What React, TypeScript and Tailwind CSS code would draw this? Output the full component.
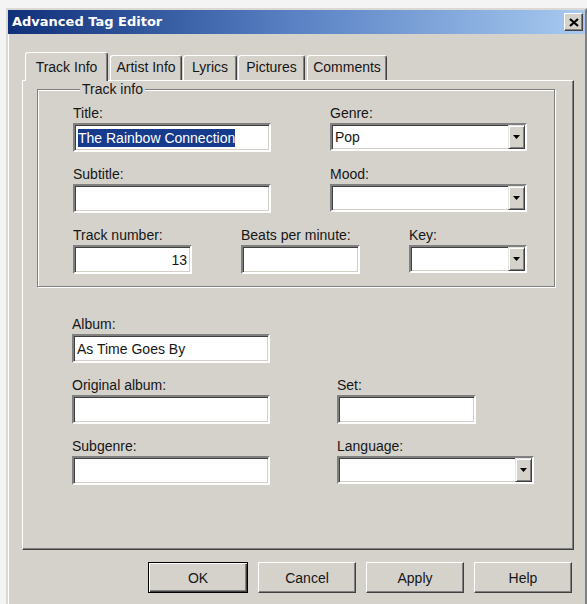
import React from "react";

const sunken =
  "bg-white border-2 border-t-[#808080] border-l-[#808080] border-b-white border-r-white shadow-[inset_1px_1px_0_#404040,inset_-1px_-1px_0_#d4d0c8]";

function Label({ text }: { text: string }) {
  return <div className="h-[18px] leading-[18px] text-[14px] whitespace-nowrap text-[#161616]">{text}</div>;
}

function TextBox({ value, right }: { value?: React.ReactNode; right?: boolean }) {
  return (
    <div
      className={
        "mt-[1px] h-[29px] flex items-center px-[3px] text-[14px] leading-[18px] text-[#161616] " +
        sunken +
        (right ? " justify-end" : "")
      }
    >
      {value}
    </div>
  );
}

function Combo({ value }: { value?: string }) {
  return (
    <div className={"mt-[1px] h-[28px] flex items-stretch " + sunken}>
      <div className="flex-1 flex items-center px-[3px] text-[14px] leading-[18px] text-[#161616]">{value}</div>
      <div className="w-[17px] flex items-center justify-center bg-[#d5d2cc] border border-t-[#e6e4e0] border-l-[#e6e4e0] border-b-[#404040] border-r-[#404040] shadow-[inset_1px_1px_0_#fff,inset_-1px_-1px_0_#808080]">
        <svg width="7" height="4" viewBox="0 0 7 4">
          <path d="M0 0H7L3.5 4Z" fill="#000" />
        </svg>
      </div>
    </div>
  );
}

function Tab({ label, cls, selected }: { label: string; cls: string; selected?: boolean }) {
  return (
    <div
      className={
        "rounded-t-[3px] border-t border-l border-white border-r border-r-[#404040] shadow-[inset_-1px_0_0_#808080] bg-[#d5d2cc] text-center text-[14px] leading-[18px] text-[#161616] whitespace-nowrap " +
        cls +
        (selected ? " relative z-10 h-[29px] -mb-[1px] pt-[5px]" : " h-[25px] pt-[2px]")
      }
    >
      {label}
    </div>
  );
}

function Btn({ label, def, cls }: { label: string; def?: boolean; cls: string }) {
  return (
    <button
      className={
        "h-[31px] bg-[#d5d2cc] text-[14px] leading-[18px] text-[#161616] " +
        cls +
        (def
          ? " border border-black shadow-[inset_1px_1px_0_#fff,inset_-1px_-1px_0_#404040,inset_-2px_-2px_0_#808080]"
          : " border border-t-white border-l-white border-b-[#404040] border-r-[#404040] shadow-[inset_-1px_-1px_0_#808080]")
      }
    >
      {label}
    </button>
  );
}

export default function App() {
  return (
    <div className="w-[587px] h-[604px] bg-[#f4f4f4] pt-[8px] pl-[6px] overflow-hidden font-['Liberation_Sans',Arial,sans-serif]">
      <div className="w-[581px] h-[600px] bg-[#d5d2cc] border-2 border-t-[#dcd9d4] border-l-[#dcd9d4] border-r-[#808080] border-b-[#808080] shadow-[inset_1px_1px_0_#fff]">
        {/* Title bar */}
        <div className="h-[24px] flex items-center justify-between pl-[4px] pr-[2px] bg-linear-to-r from-[#10307a] via-[#5a82c4] to-[#a8caf0]">
          <div className="font-['DejaVu_Sans',sans-serif] font-bold text-[13px] leading-[16px] text-white whitespace-nowrap">
            Advanced Tag Editor
          </div>
          <div className="w-[19px] h-[18px] flex items-center justify-center bg-[#d5d2cc] border border-t-white border-l-white border-b-[#404040] border-r-[#404040] shadow-[inset_-1px_-1px_0_#808080]">
            <svg width="10" height="9" viewBox="0 0 10 9">
              <path d="M1 1L9 8M9 1L1 8" stroke="#000" strokeWidth="2.2" />
            </svg>
          </div>
        </div>

        <div className="px-[14px]">
          {/* Tabs */}
          <div className="mt-[18px] h-[28px] flex items-end pl-[3px]">
            <Tab label="Track Info" cls="w-[83px]" selected />
            <Tab label="Artist Info" cls="ml-[2px] w-[72px]" />
            <Tab label="Lyrics" cls="ml-[1px] w-[54px]" />
            <Tab label="Pictures" cls="ml-[1px] w-[67px]" />
            <Tab label="Comments" cls="ml-[2px] w-[80px]" />
          </div>

          {/* Panel */}
          <div className="w-[552px] h-[470px] border border-t-white border-l-white border-r-[#404040] border-b-[#404040] shadow-[inset_-1px_-1px_0_#808080]">
            <fieldset className="ml-[14px] w-[518px] border border-[#808080] shadow-[inset_1px_1px_0_#fff,1px_1px_0_#fff] pl-[35px] pt-[7px] pb-[12px]">
              <legend className="ml-[7px] px-[2px] bg-[#d5d2cc] text-[14px] leading-[16px] text-[#161616]">Track info</legend>

              <div className="flex items-start gap-[59px]">
                <div className="w-[198px]">
                  <Label text="Title:" />
                  <TextBox
                    value={<span className="bg-[#163a8c] text-white">The Rainbow Connection</span>}
                  />
                </div>
                <div className="w-[197px]">
                  <Label text="Genre:" />
                  <Combo value="Pop" />
                </div>
              </div>

              <div className="mt-[13px] flex items-start gap-[59px]">
                <div className="w-[198px]">
                  <Label text="Subtitle:" />
                  <TextBox />
                </div>
                <div className="w-[197px]">
                  <Label text="Mood:" />
                  <Combo />
                </div>
              </div>

              <div className="mt-[13px] flex items-start gap-[49px]">
                <div className="w-[119px]">
                  <Label text="Track number:" />
                  <TextBox value="13" right />
                </div>
                <div className="w-[119px]">
                  <Label text="Beats per minute:" />
                  <TextBox />
                </div>
                <div className="w-[118px]">
                  <Label text="Key:" />
                  <Combo />
                </div>
              </div>
            </fieldset>

            <div className="pl-[49px] mt-[28px]">
              <div className="w-[198px]">
                <Label text="Album:" />
                <TextBox value="As Time Goes By" />
              </div>

              <div className="mt-[13px] flex items-start gap-[67px]">
                <div className="w-[198px]">
                  <Label text="Original album:" />
                  <TextBox />
                </div>
                <div className="w-[139px]">
                  <Label text="Set:" />
                  <TextBox />
                </div>
              </div>

              <div className="mt-[13px] flex items-start gap-[67px]">
                <div className="w-[198px]">
                  <Label text="Subgenre:" />
                  <TextBox />
                </div>
                <div className="w-[197px]">
                  <Label text="Language:" />
                  <Combo />
                </div>
              </div>
            </div>
          </div>

          {/* Buttons */}
          <div className="mt-[12px] w-[552px] pr-[2px] flex justify-end gap-[10px]">
            <Btn label="OK" def cls="w-[100px]" />
            <Btn label="Cancel" cls="w-[98px]" />
            <Btn label="Apply" cls="w-[98px]" />
            <Btn label="Help" cls="w-[98px]" />
          </div>
        </div>
      </div>
    </div>
  );
}
